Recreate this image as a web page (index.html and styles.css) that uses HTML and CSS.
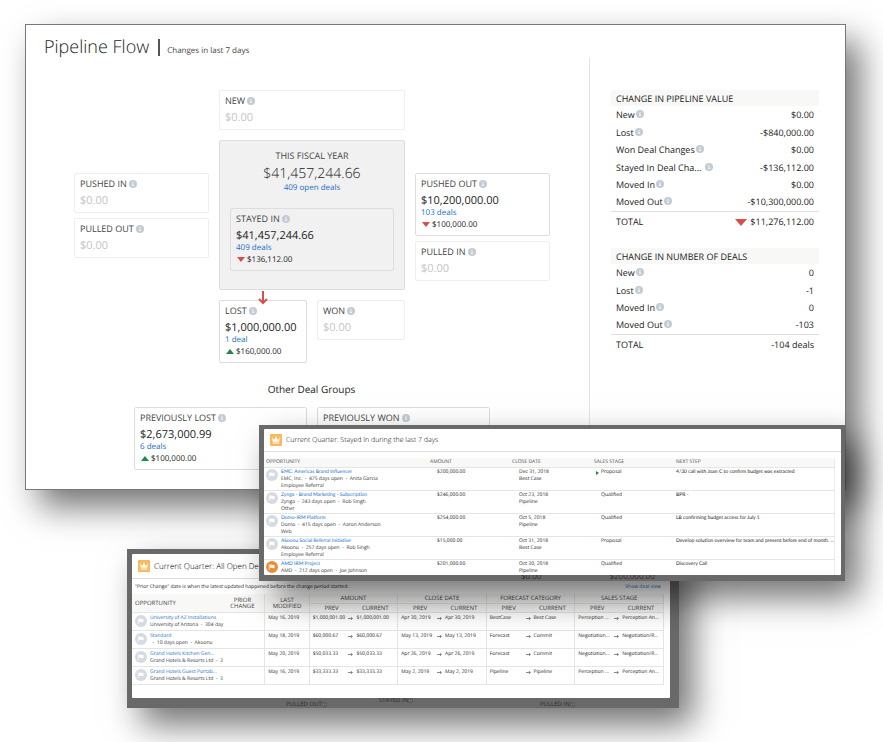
FILE: index.html
```
<!DOCTYPE html>
<html lang="en">
<head>
  <meta charset="utf-8">
  <title>Pipeline Flow</title>
  <link rel="stylesheet" href="styles.css">
</head>
<body>
  <svg class="defs" aria-hidden="true">
    <symbol id="info" viewBox="0 0 16 16">
      <circle cx="8" cy="8" r="8" fill="#c3cbd3"/>
      <path d="M7 3.500h2v2H7zM6 7h3v4h1v1H6v-1h1V8H6z" fill="#fff"/>
    </symbol>
    <symbol id="info-dim" viewBox="0 0 16 16">
      <circle cx="8" cy="8" r="7" fill="#777" stroke="#444" stroke-width="2"/>
      <path d="M7 4h2v2H7zM7 7h2v5H7z" fill="#444"/>
    </symbol>
    <symbol id="flag" viewBox="0 0 24 24">
      <circle cx="12" cy="12" r="12" fill="currentColor"/>
      <path d="M6.500 7v11" stroke="#fff" stroke-width="1.500"/>
      <path d="M8 7.500c3-1.500 4.500 1.500 9 0v6.500c-4.500 1.500-6-1.500-9 0z" fill="#fff"/>
    </symbol>
    <symbol id="crown" viewBox="0 0 24 24">
      <rect width="24" height="24" rx="2" fill="#fcb95b"/>
      <path d="M5.500 15.500L4.500 8.500l4 3L12 6l3.500 5.500 4-3-1 7zM5.500 17h13v2h-13z" fill="#fff"/>
      <circle cx="4.500" cy="8" r="1.200" fill="#fff"/>
      <circle cx="12" cy="5.800" r="1.400" fill="#fff"/>
      <circle cx="19.500" cy="8" r="1.200" fill="#fff"/>
    </symbol>
    <symbol id="arrow" viewBox="0 0 12 10">
      <path d="M0 5h10M7 1.500L10.500 5 7 8.500" fill="none" stroke="#444" stroke-width="1.500"/>
    </symbol>
  </svg>

  <main class="pipeline">
    <header class="title-bar">
      <h1>Pipeline Flow</h1>
      <span class="subtitle">Changes in last 7 days</span>
    </header>

    <div class="content">
      <section class="flow">
        <div class="flow-grid">
          <div class="card empty new">
            <h3>NEW <svg class="info"><use href="#info"/></svg></h3>
            <p class="value">$0.00</p>
          </div>

          <div class="side left">
            <div class="card empty">
              <h3>PUSHED IN <svg class="info"><use href="#info"/></svg></h3>
              <p class="value">$0.00</p>
            </div>
            <div class="card empty">
              <h3>PULLED OUT <svg class="info"><use href="#info"/></svg></h3>
              <p class="value">$0.00</p>
            </div>
          </div>

          <div class="fiscal">
            <h3>THIS FISCAL YEAR</h3>
            <p class="big">$41,457,244.66</p>
            <a href="#">409 open deals</a>
            <div class="card stayed">
              <h3>STAYED IN <svg class="info"><use href="#info"/></svg></h3>
              <p class="value">$41,457,244.66</p>
              <a href="#">409 deals</a>
              <p class="change"><span class="down"></span>$136,112.00</p>
            </div>
          </div>

          <div class="side right">
            <div class="card">
              <h3>PUSHED OUT <svg class="info"><use href="#info"/></svg></h3>
              <p class="value">$10,200,000.00</p>
              <a href="#">103 deals</a>
              <p class="change"><span class="down"></span>$100,000.00</p>
            </div>
            <div class="card empty">
              <h3>PULLED IN <svg class="info"><use href="#info"/></svg></h3>
              <p class="value">$0.00</p>
            </div>
          </div>

          <div class="closed">
            <div class="card lost">
              <svg class="lost-arrow" viewBox="0 0 10 14"><path d="M5 0v12M1 8l4 4 4-4" fill="none" stroke="#d4504c" stroke-width="2"/></svg>
              <h3>LOST <svg class="info"><use href="#info"/></svg></h3>
              <p class="value">$1,000,000.00</p>
              <a href="#">1 deal</a>
              <p class="change"><span class="up"></span>$160,000.00</p>
            </div>
            <div class="card empty">
              <h3>WON <svg class="info"><use href="#info"/></svg></h3>
              <p class="value">$0.00</p>
            </div>
          </div>
        </div>

        <h2>Other Deal Groups</h2>
        <div class="groups">
          <div class="card">
            <h3>PREVIOUSLY LOST <svg class="info"><use href="#info"/></svg></h3>
            <p class="value">$2,673,000.99</p>
            <a href="#">6 deals</a>
            <p class="change"><span class="up"></span>$100,000.00</p>
          </div>
          <div class="card">
            <h3>PREVIOUSLY WON <svg class="info"><use href="#info"/></svg></h3>
          </div>
        </div>
      </section>

      <aside class="summary">
        <table>
          <thead><tr><th colspan="2">CHANGE IN PIPELINE VALUE</th></tr></thead>
          <tbody>
            <tr><td>New<svg class="info"><use href="#info"/></svg></td><td>$0.00</td></tr>
            <tr><td>Lost<svg class="info"><use href="#info"/></svg></td><td>-$840,000.00</td></tr>
            <tr><td>Won Deal Changes<svg class="info"><use href="#info"/></svg></td><td>$0.00</td></tr>
            <tr><td>Stayed In Deal Cha... <svg class="info"><use href="#info"/></svg></td><td>-$136,112.00</td></tr>
            <tr><td>Moved In<svg class="info"><use href="#info"/></svg></td><td>$0.00</td></tr>
            <tr><td>Moved Out<svg class="info"><use href="#info"/></svg></td><td>-$10,300,000.00</td></tr>
          </tbody>
          <tfoot><tr><td>TOTAL</td><td><span class="down large"></span>$11,276,112.00</td></tr></tfoot>
        </table>

        <table>
          <thead><tr><th colspan="2">CHANGE IN NUMBER OF DEALS</th></tr></thead>
          <tbody>
            <tr><td>New<svg class="info"><use href="#info"/></svg></td><td>0</td></tr>
            <tr><td>Lost<svg class="info"><use href="#info"/></svg></td><td>-1</td></tr>
            <tr><td>Moved In<svg class="info"><use href="#info"/></svg></td><td>0</td></tr>
            <tr><td>Moved Out<svg class="info"><use href="#info"/></svg></td><td>-103</td></tr>
          </tbody>
          <tfoot><tr><td>TOTAL</td><td>-104 deals</td></tr></tfoot>
        </table>
      </aside>
    </div>
  </main>

  <!-- all open deals -->
  <section class="window open-deals">
    <div class="modal">
      <header><svg class="crown"><use href="#crown"/></svg><h2>Current Quarter: All Open Dea</h2></header>
      <div class="note"><span>"Prior Change" date is when the latest updated happened before the change period started.</span><a href="#">Show deal view</a></div>
      <table class="history">
        <colgroup>
          <col class="c-opp"><col class="c-prior"><col class="c-mod">
          <col span="8" class="c-half">
        </colgroup>
        <thead>
          <tr>
            <th rowspan="2" class="start">OPPORTUNITY</th>
            <th rowspan="2">PRIOR<br>CHANGE</th>
            <th rowspan="2" class="line">LAST<br>MODIFIED</th>
            <th colspan="2" class="line">AMOUNT</th>
            <th colspan="2" class="line">CLOSE DATE</th>
            <th colspan="2" class="line">FORECAST CATEGORY</th>
            <th colspan="2" class="line">SALES STAGE</th>
          </tr>
          <tr>
            <th class="line">PREV</th><th>CURRENT</th>
            <th class="line">PREV</th><th>CURRENT</th>
            <th class="line">PREV</th><th>CURRENT</th>
            <th class="line">PREV</th><th>CURRENT</th>
          </tr>
        </thead>
        <tbody>
          <tr>
            <td><div class="opp"><svg class="flag"><use href="#flag"/></svg><div><a href="#">University of AZ Installations</a><p>University of Arizona &nbsp;-&nbsp; 304 day</p></div></div></td>
            <td></td>
            <td class="line">May 16, 2019</td>
            <td class="line prev">$1,000,001.00<svg class="arrow"><use href="#arrow"/></svg></td><td>$1,000,001.00</td>
            <td class="line prev">Apr 30, 2019<svg class="arrow"><use href="#arrow"/></svg></td><td>Apr 30, 2019</td>
            <td class="line prev">BestCase<svg class="arrow"><use href="#arrow"/></svg></td><td>Best Case</td>
            <td class="line prev">Perception ...<svg class="arrow"><use href="#arrow"/></svg></td><td>Perception An...</td>
          </tr>
          <tr>
            <td><div class="opp"><svg class="flag"><use href="#flag"/></svg><div><a href="#">Standard</a><p>&nbsp; -&nbsp; 10 days open &nbsp;-&nbsp; Akoonu</p></div></div></td>
            <td></td>
            <td class="line">May 18, 2019</td>
            <td class="line prev">$60,000.67<svg class="arrow"><use href="#arrow"/></svg></td><td>$60,000.67</td>
            <td class="line prev">May 13, 2019<svg class="arrow"><use href="#arrow"/></svg></td><td>May 13, 2019</td>
            <td class="line prev">Forecast<svg class="arrow"><use href="#arrow"/></svg></td><td>Commit</td>
            <td class="line prev">Negotiation...<svg class="arrow"><use href="#arrow"/></svg></td><td>Negotiation/R...</td>
          </tr>
          <tr>
            <td><div class="opp"><svg class="flag"><use href="#flag"/></svg><div><a href="#">Grand Hotels Kitchen Gen...</a><p>Grand Hotels &amp; Resorts Ltd &nbsp;-&nbsp; 3</p></div></div></td>
            <td></td>
            <td class="line">May 20, 2019</td>
            <td class="line prev">$50,033.33<svg class="arrow"><use href="#arrow"/></svg></td><td>$50,033.33</td>
            <td class="line prev">Apr 26, 2019<svg class="arrow"><use href="#arrow"/></svg></td><td>Apr 26, 2019</td>
            <td class="line prev">Forecast<svg class="arrow"><use href="#arrow"/></svg></td><td>Commit</td>
            <td class="line prev">Negotiation...<svg class="arrow"><use href="#arrow"/></svg></td><td>Negotiation/R...</td>
          </tr>
          <tr>
            <td><div class="opp"><svg class="flag"><use href="#flag"/></svg><div><a href="#">Grand Hotels Guest Portab...</a><p>Grand Hotels &amp; Resorts Ltd &nbsp;-&nbsp; 3</p></div></div></td>
            <td></td>
            <td class="line">May 16, 2019</td>
            <td class="line prev">$33,333.33<svg class="arrow"><use href="#arrow"/></svg></td><td>$33,333.33</td>
            <td class="line prev">May 2, 2019<svg class="arrow"><use href="#arrow"/></svg></td><td>May 2, 2019</td>
            <td class="line prev">Pipeline<svg class="arrow"><use href="#arrow"/></svg></td><td>Pipeline</td>
            <td class="line prev">Perception ...<svg class="arrow"><use href="#arrow"/></svg></td><td>Perception An...</td>
          </tr>
        </tbody>
      </table>
    </div>
    <div class="backdrop">
      <span class="dim-out">PULLED OUT<svg class="dot"><use href="#info-dim"/></svg></span>
      <span class="dim-stayed">STAYED IN<svg class="dot"><use href="#info-dim"/></svg></span>
      <span class="dim-in">PULLED IN<svg class="dot"><use href="#info-dim"/></svg></span>
    </div>
  </section>

  <!-- stayed in -->
  <section class="window stayed-in">
    <div class="modal">
      <header><svg class="crown"><use href="#crown"/></svg><h2>Current Quarter: Stayed In during the last 7 days</h2></header>
      <table class="deals">
        <colgroup><col class="d-opp"><col class="d-mid"><col class="d-mid"><col class="d-mid"><col></colgroup>
        <thead>
          <tr><th>OPPORTUNITY</th><th>AMOUNT</th><th>CLOSE DATE</th><th>SALES STAGE</th><th>NEXT STEP</th></tr>
        </thead>
        <tbody>
          <tr>
            <td><div class="opp"><svg class="flag"><use href="#flag"/></svg><div><a href="#">EMC: Americas Brand Influencer</a><p>EMC, Inc. &nbsp;-&nbsp; 475 days open &nbsp;-&nbsp; Anita Garcia</p><p>Employee Referral</p></div></div></td>
            <td>$200,000.00</td><td>Dec 31, 2018<p>Best Case</p></td><td class="moved">Proposal</td><td>4/30 call with Joan C to confirm budget was extracted</td>
          </tr>
          <tr>
            <td><div class="opp"><svg class="flag"><use href="#flag"/></svg><div><a href="#">Zynga - Brand Marketing - Subscription</a><p>Zynga &nbsp;-&nbsp; 243 days open &nbsp;-&nbsp; Rob Singh</p><p>Other</p></div></div></td>
            <td>$246,000.00</td><td>Oct 23, 2018<p>Pipeline</p></td><td>Qualified</td><td>BPR -</td>
          </tr>
          <tr>
            <td><div class="opp"><svg class="flag"><use href="#flag"/></svg><div><a href="#">Domo-IRM Platform</a><p>Domo &nbsp;-&nbsp; 415 days open &nbsp;-&nbsp; Aaron Anderson</p><p>Web</p></div></div></td>
            <td>$254,000.00</td><td>Oct 5, 2018<p>Pipeline</p></td><td>Qualified</td><td>LB confirming budget access for July 1</td>
          </tr>
          <tr>
            <td><div class="opp"><svg class="flag"><use href="#flag"/></svg><div><a href="#">Akoonu Social Referral Initiative</a><p>Akoonu &nbsp;-&nbsp; 257 days open &nbsp;-&nbsp; Rob Singh</p><p>Employee Referral</p></div></div></td>
            <td>$15,000.00</td><td>Oct 31, 2018<p>Best Case</p></td><td>Proposal</td><td>Develop solution overview for team and present before end of month. ...</td>
          </tr>
          <tr>
            <td><div class="opp"><svg class="flag hot"><use href="#flag"/></svg><div><a href="#">AMD IRM Project</a><p>AMD &nbsp;-&nbsp; 212 days open &nbsp;-&nbsp; Joe Johnson</p></div></div></td>
            <td>$201,000.00</td><td>Oct 30, 2018<p>Pipeline</p></td><td>Qualified</td><td>Discovery Call</td>
          </tr>
        </tbody>
      </table>
    </div>
    <div class="backdrop"><span>$0.00</span><span>$200,000.00</span></div>
  </section>
</body>
</html>
```
FILE: styles.css
```
* {
  box-sizing: border-box;
}

body {
  margin: 0;
  padding: 24px 37px 0 25px;
  position: relative;
  min-height: 100vh;
  overflow: hidden;
  background: #fff;
  color: #222;
  font-family: "Open Sans", "Noto Sans", sans-serif;
  font-size: 9px;
  text-rendering: geometricPrecision;
}

h1, h2, h3, p {
  margin: 0;
  font-weight: 400;
}

a {
  color: #1670cc;
  text-decoration: none;
}

.defs {
  position: absolute;
  width: 0;
  height: 0;
}

.info {
  width: 8px;
  height: 8px;
}

/* main panel */
.pipeline {
  display: flex;
  flex-direction: column;
  min-height: 466px;
  border: 1px solid #777;
  background: #fff;
  box-shadow: 14px 17px 32px rgba(0, 0, 0, 0.55);
}

.title-bar {
  display: flex;
  align-items: center;
  height: 33px;
  padding: 12px 0 0 18px;
}

h1 {
  padding-right: 9px;
  border-right: 2px solid #555;
  font-size: 18px;
  font-weight: 300;
  line-height: 17px;
}

.subtitle {
  padding: 6px 0 0 7px;
  font-size: 8px;
  line-height: 12px;
  color: #444;
}

.content {
  display: flex;
  flex: 1;
}

.flow {
  flex: 1;
  padding-top: 32px;
}

.flow-grid {
  display: grid;
  grid-template-columns: 135px 186px 135px;
  gap: 10px;
  padding-left: 48px;
}

.card {
  height: 63px;
  padding: 5px;
  border: 1px solid #ddd;
  border-radius: 2px;
  background: #fff;
}

.card.empty {
  height: 40px;
  border-color: #eee;
}

h3 {
  font-size: 9px;
  line-height: 10px;
  color: #444;
}

h3 .info {
  vertical-align: -1px;
}

.value {
  margin-top: 4px;
  font-size: 11px;
  line-height: 15px;
}

.empty .value {
  color: #c4c4c4;
}

.card a {
  display: block;
  font-size: 8px;
  line-height: 10px;
}

.change {
  display: flex;
  align-items: center;
  gap: 2px;
  padding-left: 1px;
  font-size: 8px;
  line-height: 13px;
}

.down, .up {
  display: inline-block;
  border: 4px solid transparent;
  border-top: 5px solid #d4504c;
  border-bottom: 0;
}

.up {
  border-top: 0;
  border-bottom: 5px solid #1c8a4e;
}

.down.large {
  margin-right: 3px;
  border-width: 7px 6px 0;
  vertical-align: -1px;
}

.new {
  grid-column: 2;
}

.side {
  display: flex;
  flex-direction: column;
  gap: 5px;
  grid-row: 2;
  padding-top: 33px;
}

.left {
  grid-column: 1;
}

.right {
  grid-column: 3;
}

.fiscal {
  grid-column: 2;
  grid-row: 2;
  height: 150px;
  padding: 10px;
  border: 1px solid #ddd;
  border-radius: 2px;
  background: #f1f1f1;
  text-align: center;
}

.big {
  margin-top: 4px;
  font-size: 14px;
  font-weight: 300;
  line-height: 18px;
}

.fiscal > a {
  display: block;
  font-size: 8px;
  line-height: 10px;
}

.stayed {
  margin-top: 15px;
  background: #f1f1f1;
  text-align: left;
}

.closed {
  display: flex;
  align-items: flex-start;
  gap: 10px;
  grid-column: 2;
  grid-row: 3;
}

.closed .card {
  flex: 1;
}

.lost {
  position: relative;
}

.lost-arrow {
  position: absolute;
  top: -10px;
  left: 50%;
  width: 10px;
  height: 14px;
  margin-left: -5px;
}

.flow h2 {
  margin: 19px 0 10px 8px;
  font-size: 10px;
  line-height: 15px;
  text-align: center;
}

.groups {
  display: flex;
  gap: 10px;
  padding-left: 108px;
}

.groups .card {
  width: 173px;
}

/* totals on the right */
.summary {
  width: 256px;
  padding: 32px 26px 0 21px;
  border-left: 1px solid #e3e3e3;
}

.summary table {
  width: 100%;
  margin-bottom: 17px;
  border-collapse: collapse;
}

.summary th {
  height: 16px;
  padding: 0 5px;
  background: #f8f8f7;
  font-size: 9px;
  font-weight: 400;
  line-height: 13px;
  text-align: left;
}

.summary td {
  height: 17px;
  padding: 0 5px;
  line-height: 13px;
  white-space: nowrap;
}

.summary tr:nth-child(even) td {
  height: 18px;
}

.summary td:last-child {
  text-align: right;
}

.summary td .info {
  margin-left: 1px;
}

.summary tfoot td {
  height: 20px;
  border-top: 1px solid #ddd;
}

/* windows over the panel */
.window {
  position: absolute;
  display: flex;
  flex-direction: column;
  background: #696969;
  box-shadow: 14px 17px 32px rgba(0, 0, 0, 0.55);
}

.open-deals {
  top: 549px;
  left: 127px;
  right: 204px;
  height: 159px;
  padding: 5px 9px 0 5px;
}

.stayed-in {
  top: 425px;
  left: 259px;
  right: 38px;
  height: 156px;
  padding: 4px 4px 0 5px;
}

.modal {
  flex: 1;
  overflow: hidden;
  border-radius: 1px;
  background: #fff;
}

.modal header {
  display: flex;
  align-items: center;
  height: 25px;
  padding-left: 6px;
  border-bottom: 1px solid #ddd;
}

.modal h2 {
  margin-left: 4px;
  font-size: 8px;
  font-weight: 300;
  color: #000;
}

.crown {
  width: 12px;
  height: 12px;
}

.stayed-in header {
  height: 23px;
}

.stayed-in h2 {
  font-size: 7px;
}

.modal table {
  border-collapse: collapse;
  table-layout: fixed;
}

.modal th {
  background: #f8f8f7;
  font-size: 5px;
  line-height: 6px;
  color: #444;
}

.modal td {
  font-size: 5px;
  line-height: 7px;
  vertical-align: top;
  white-space: nowrap;
}

.opp {
  display: flex;
  gap: 3px;
}

.opp p {
  color: #333;
}

.flag {
  flex: none;
  width: 12px;
  height: 12px;
  color: #d5dae3;
}

.flag.hot {
  color: #f28b30;
}

.note {
  display: flex;
  justify-content: space-between;
  padding: 4px 9px 3px 3px;
  font-size: 5px;
  line-height: 8px;
}

.history {
  width: calc(100% - 6px);
}

.c-opp {
  width: 88px;
}

.c-prior, .c-mod, .c-half {
  width: 44px;
}

.modal .history th {
  height: 9px;
  padding: 0;
  border-bottom: 1px solid #e5e5e5;
  font-size: 6px;
  font-weight: 400;
}

.history th.start {
  padding-left: 3px;
  text-align: left;
}

.modal .history .line {
  border-left: 1px solid #e5e5e5;
}

.history tr > :last-child {
  border-right: 1px solid #e5e5e5;
}

.history td {
  height: 18px;
  padding: 2px 0 0 3px;
  border-bottom: 1px solid #e5e5e5;
}

.history .prev {
  position: relative;
}

.arrow {
  position: absolute;
  top: 3px;
  right: 0;
  width: 5px;
  height: 5px;
}

.deals {
  width: calc(100% - 6px);
  margin-top: 6px;
  border-right: 1px solid #eee;
}

.d-opp {
  width: 166px;
}

.d-mid {
  width: 82px;
}

.deals th {
  height: 9px;
  padding: 0;
  border-bottom: 1px solid #e5e5e5;
  font-weight: 400;
  text-align: left;
}

.deals th:first-child {
  padding-left: 2px;
}

.deals td {
  height: 23px;
  padding: 1px 0 0 7px;
  border-bottom: 1px solid #e5e5e5;
}

.deals td:first-child {
  padding-left: 2px;
}

.deals td:last-child {
  padding-left: 0;
}

.deals a, .deals td:last-child {
  font-family: Lato, "Open Sans", sans-serif;
}

.moved {
  position: relative;
}

.moved::before {
  content: "";
  position: absolute;
  top: 3px;
  left: 2px;
  border: 2px solid transparent;
  border-left: 3px solid #1c8a4e;
  border-right: 0;
}

/* dimmed page that shows round a window */
.backdrop {
  display: flex;
  height: 10px;
  padding-left: 154px;
  overflow: hidden;
  font-size: 6px;
  line-height: 12px;
  color: #2c2c2c;
}

.dot {
  width: 5px;
  height: 5px;
  vertical-align: -1px;
}

.dim-out {
  width: 93px;
}

.dim-stayed {
  width: 161px;
  line-height: 4px;
}

.stayed-in .backdrop {
  height: 6px;
  padding-left: 257px;
  gap: 68px;
  font-size: 8px;
  line-height: 3px;
}
```
